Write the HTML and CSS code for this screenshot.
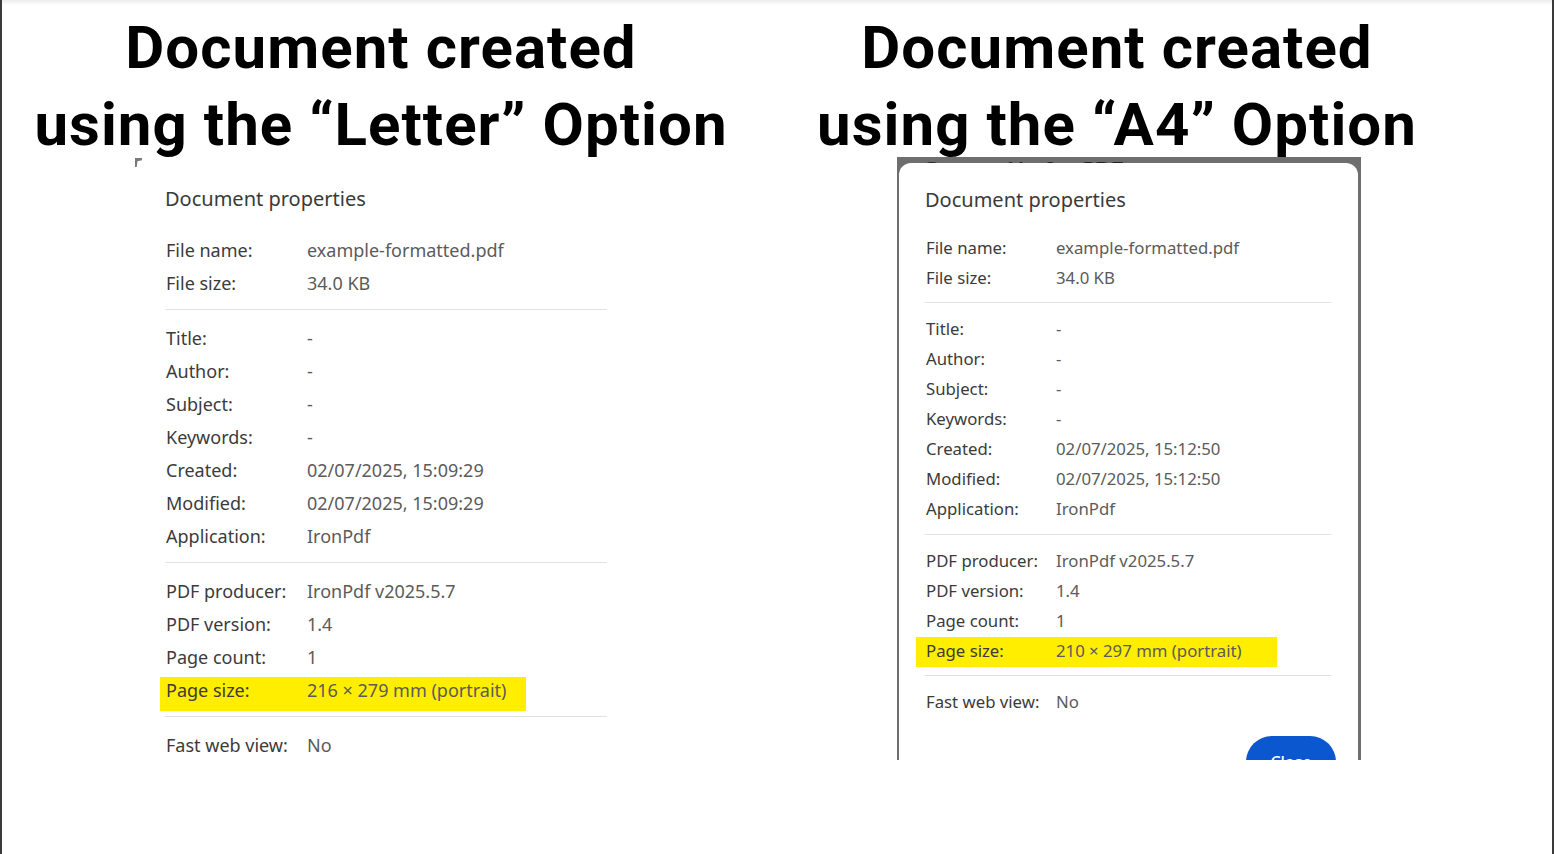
FILE: index.html
```html
<!DOCTYPE html>
<html lang="en">
<head>
<meta charset="utf-8">
<title>Letter vs A4</title>
<link rel="stylesheet" href="styles.css">
</head>
<body>
<div class="page">
  <section class="col col-left">
    <h1 class="heading">Document created<br>using the “Letter” Option</h1>
    <div class="dlg dlg-letter">
      <div class="dlg-title">Document properties</div>
      <div class="sec">
        <div class="row"><span class="lbl">File name:</span><span class="val">example-formatted.pdf</span></div>
        <div class="row"><span class="lbl">File size:</span><span class="val">34.0 KB</span></div>
      </div>
      <div class="sec">
        <div class="row"><span class="lbl">Title:</span><span class="val">-</span></div>
        <div class="row"><span class="lbl">Author:</span><span class="val">-</span></div>
        <div class="row"><span class="lbl">Subject:</span><span class="val">-</span></div>
        <div class="row"><span class="lbl">Keywords:</span><span class="val">-</span></div>
        <div class="row"><span class="lbl">Created:</span><span class="val">02/07/2025, 15:09:29</span></div>
        <div class="row"><span class="lbl">Modified:</span><span class="val">02/07/2025, 15:09:29</span></div>
        <div class="row"><span class="lbl">Application:</span><span class="val">IronPdf</span></div>
      </div>
      <div class="sec">
        <div class="row"><span class="lbl">PDF producer:</span><span class="val">IronPdf v2025.5.7</span></div>
        <div class="row"><span class="lbl">PDF version:</span><span class="val">1.4</span></div>
        <div class="row"><span class="lbl">Page count:</span><span class="val">1</span></div>
        <div class="row hl"><span class="lbl">Page size:</span><span class="val">216 × 279 mm (portrait)</span></div>
      </div>
      <div class="sec last">
        <div class="row"><span class="lbl">Fast web view:</span><span class="val">No</span></div>
      </div>
    </div>
  </section>

  <section class="col col-right">
    <h1 class="heading">Document created<br>using the “A4” Option</h1>
    <div class="frame">
      <div class="band"><span class="band-text">Generated by IronPDF</span></div>
      <div class="dlg dlg-a4">
        <div class="dlg-title">Document properties</div>
        <div class="sec">
          <div class="row"><span class="lbl">File name:</span><span class="val">example-formatted.pdf</span></div>
          <div class="row"><span class="lbl">File size:</span><span class="val">34.0 KB</span></div>
        </div>
        <div class="sec">
          <div class="row"><span class="lbl">Title:</span><span class="val">-</span></div>
          <div class="row"><span class="lbl">Author:</span><span class="val">-</span></div>
          <div class="row"><span class="lbl">Subject:</span><span class="val">-</span></div>
          <div class="row"><span class="lbl">Keywords:</span><span class="val">-</span></div>
          <div class="row"><span class="lbl">Created:</span><span class="val">02/07/2025, 15:12:50</span></div>
          <div class="row"><span class="lbl">Modified:</span><span class="val">02/07/2025, 15:12:50</span></div>
          <div class="row"><span class="lbl">Application:</span><span class="val">IronPdf</span></div>
        </div>
        <div class="sec">
          <div class="row"><span class="lbl">PDF producer:</span><span class="val">IronPdf v2025.5.7</span></div>
          <div class="row"><span class="lbl">PDF version:</span><span class="val">1.4</span></div>
          <div class="row"><span class="lbl">Page count:</span><span class="val">1</span></div>
          <div class="row hl"><span class="lbl">Page size:</span><span class="val">210 × 297 mm (portrait)</span></div>
        </div>
        <div class="sec last">
          <div class="row"><span class="lbl">Fast web view:</span><span class="val">No</span></div>
        </div>
        <div class="actions"><button class="btn">Close</button></div>
      </div>
    </div>
  </section>
</div>
</body>
</html>
```

FILE: styles.css
```css
* { box-sizing: border-box; }

html, body {
  margin: 0;
  padding: 0;
  background: #ffffff;
}

.page {
  width: 1554px;
  height: 854px;
  display: flex;
  border-left: 2px solid #3a3a3a;
  border-right: 2px solid #3a3a3a;
  background: linear-gradient(#ececec 0, #ffffff 5px) no-repeat;
  overflow: hidden;
}

.col {
  display: flex;
  flex-direction: column;
}

.col-left { width: 758px; }
.col-right { width: 714px; }

.heading {
  position: relative;
  z-index: 1;
  margin: 0;
  padding-top: 9px;
  height: 157px;
  font-family: Roboto, "Liberation Sans", sans-serif;
  font-weight: 700;
  font-size: 60px;
  line-height: 77px;
  color: #000;
  text-align: center;
  letter-spacing: 1.05px;
  white-space: nowrap;
}

/* dialog common */
.dlg {
  position: relative;
  z-index: 0;
  font-family: "Noto Sans", "Open Sans", sans-serif;
  background: #fff;
}

.dlg-title {
  font-size: 20px;
  line-height: 28px;
  color: #3a3a3a;
}

.sec {
  border-bottom: 1px solid #e2e2e2;
}
.sec.last { border-bottom: none; }

.row {
  display: flex;
  align-items: center;
  position: relative;
  white-space: nowrap;
}

.lbl { color: #3b3b3b; }
.val { color: #5b5b5b; }

.row.hl { z-index: 0; }
.row.hl::before {
  content: "";
  position: absolute;
  z-index: -1;
  background: #ffee00;
}

/* Letter dialog */
.dlg-letter {
  margin-left: 133px;
  margin-top: 1px;
  width: 500px;
  padding: 27px 0 0 30px;
}
.dlg-letter::before {
  content: "";
  position: absolute;
  left: 0;
  top: 0;
  width: 7px;
  height: 9px;
  background: #7a7a7a;
  clip-path: polygon(0 0, 100% 0, 100% 25%, 35% 35%, 25% 100%, 0 100%);
}
.dlg-letter .dlg-title { margin-bottom: 20px; }
.dlg-letter .sec {
  width: 442px;
  padding: 11px 0 10px;
}
.dlg-letter .sec:nth-child(2) { padding-top: 0; }
.dlg-letter .row {
  height: 33px;
  font-size: 18px;
}
.dlg-letter .lbl { width: 142px; padding-left: 1px; }
.dlg-letter .row.hl::before {
  left: -5px;
  top: 3.5px;
  width: 366px;
  height: 34px;
}

/* A4 frame */
.frame {
  margin-left: 137px;
  width: 464px;
  height: 603px;
  background: #6e6e6e;
  padding: 0 3px 0 2px;
  overflow: hidden;
}
.band {
  height: 6px;
  overflow: hidden;
  padding-left: 24px;
}
.band-text {
  display: block;
  font-family: "Liberation Serif", serif;
  font-size: 22px;
  line-height: 22px;
  margin-top: 1px;
  color: #1e1e1e;
  white-space: nowrap;
}
.dlg-a4 {
  border-radius: 12px 12px 0 0;
  height: 597px;
  padding: 23px 27px 0 26px;
}
.dlg-a4 .dlg-title { margin-bottom: 18px; }
.dlg-a4 .sec {
  padding: 10px 0 10px;
}
.dlg-a4 .sec:nth-child(2) { padding-top: 0; }
.dlg-a4 .sec:nth-child(3) { padding-bottom: 11px; }
.dlg-a4 .sec.last { padding-bottom: 0; }
.dlg-a4 .row {
  height: 30px;
  font-size: 16.75px;
}
.dlg-a4 .lbl { width: 131px; padding-left: 1px; }
.dlg-a4 .row.hl::before {
  left: -9px;
  top: 2px;
  width: 361px;
  height: 30px;
}

.actions {
  display: flex;
  justify-content: flex-end;
  margin-top: 20px;
}
.btn {
  margin-right: -5px;
  width: 90px;
  height: 52px;
  border: none;
  border-radius: 26px;
  background: #0b57d0;
  color: #fff;
  font-family: "Noto Sans", sans-serif;
  font-size: 16px;
  font-weight: 500;
}
```
